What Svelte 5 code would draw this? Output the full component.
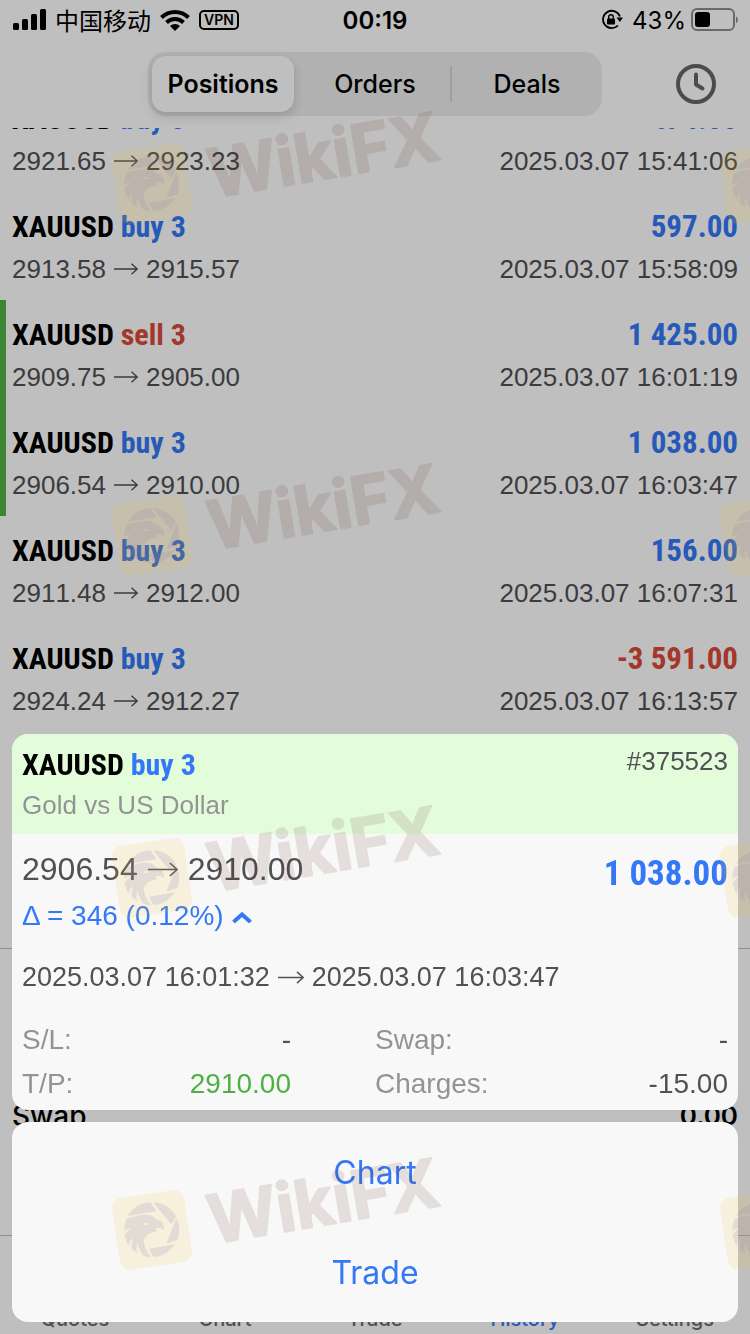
<!--
	Trading history screen: closed deals list with the detail sheet of one deal opened over it.
	The screen below is drawn in its normal colours and dimmed by the scrim.
-->
<script lang="ts">
	type Side = 'buy' | 'sell';

	interface Deal {
		side: Side;
		open: string;
		close: string;
		profit: string;
		time: string;
		takeProfit?: boolean;
	}

	const segments = ['Positions', 'Orders', 'Deals'];
	const tabs = ['Quotes', 'Chart', 'Trade', 'History', 'Settings'];

	const deals: Deal[] = [
		{ side: 'buy', open: '2921.65', close: '2923.23', profit: '474.00', time: '2025.03.07 15:41:06' },
		{ side: 'buy', open: '2913.58', close: '2915.57', profit: '597.00', time: '2025.03.07 15:58:09' },
		{ side: 'sell', open: '2909.75', close: '2905.00', profit: '1 425.00', time: '2025.03.07 16:01:19', takeProfit: true },
		{ side: 'buy', open: '2906.54', close: '2910.00', profit: '1 038.00', time: '2025.03.07 16:03:47', takeProfit: true },
		{ side: 'buy', open: '2911.48', close: '2912.00', profit: '156.00', time: '2025.03.07 16:07:31' },
		{ side: 'buy', open: '2924.24', close: '2912.27', profit: '-3 591.00', time: '2025.03.07 16:13:57' }
	];

	const stats = [
		{ label: 'S/L:', value: '-' },
		{ label: 'Swap:', value: '-' },
		{ label: 'T/P:', value: '2910.00', hit: true },
		{ label: 'Charges:', value: '-15.00' }
	];

	const stampRows = [184, 536, 878, 1230];
	const stampColumns = [152, 760];

	let activeSegment = $state('Positions');
	let activeTab = $state('History');
	let expanded = $state(true);
</script>

{#snippet arrow(size: number)}
	<svg class="arrow" width={size} height={size / 2} viewBox="0 0 24 12" role="img" aria-label="to">
		<path d="M0 6H23M17.500 .8L23.200 6L17.500 11.200" fill="none" stroke="currentColor" stroke-width="1.300" />
	</svg>
{/snippet}

<div class="screen">
	<div class="status">
		<div class="status-left">
			<svg width="34" height="22" viewBox="0 0 34 22" aria-hidden="true">
				<rect x="1" y="14" width="6" height="7" rx="1.500" />
				<rect x="10" y="10" width="6" height="11" rx="1.500" />
				<rect x="19" y="5" width="6" height="16" rx="1.500" />
				<rect x="28" y="0" width="6" height="21" rx="1.500" />
			</svg>
			<span class="carrier">中国移动</span>
			<svg width="30" height="22" viewBox="0 0 30 22" aria-hidden="true">
				<path d="M1.500 8.500C9 1 21 1 28.500 8.500" fill="none" stroke="#000" stroke-width="4" />
				<path d="M6.500 13.500C11.500 8.700 18.500 8.700 23.500 13.500" fill="none" stroke="#000" stroke-width="4" />
				<path d="M10 17C13 14.300 17 14.300 20 17L15 22Z" />
			</svg>
			<span class="vpn">VPN</span>
		</div>
		<span class="time">00:19</span>
		<div class="status-right">
			<svg width="22" height="22" viewBox="0 0 22 22" aria-hidden="true">
				<path d="M18.900 7.500A8.700 8.700 0 1 0 17 16.500" fill="none" stroke="#000" stroke-width="1.800" />
				<path d="M15.500 8.500H22L18.900 13Z" />
				<rect x="6" y="9.500" width="8" height="6" rx="1" />
				<path d="M7.700 10V8A2.300 2.300 0 0 1 12.300 8V10" fill="none" stroke="#000" stroke-width="1.400" />
			</svg>
			<span class="battery">
				43%
				<svg width="48" height="24" viewBox="0 0 48 24" aria-hidden="true">
					<rect x="2" y="1" width="42" height="21" rx="5" fill="none" stroke="#8c8c8c" stroke-width="2" />
					<rect x="5" y="4" width="15" height="15" rx="3" />
					<path d="M46 8.500C48.500 9.500 48.500 14 46 15Z" fill="#8c8c8c" />
				</svg>
			</span>
		</div>
	</div>

	<header class="toolbar">
		<div class="segments" role="tablist" aria-label="History type">
			{#each segments as name}
				<button
					type="button"
					role="tab"
					class="segment"
					class:active={activeSegment === name}
					aria-selected={activeSegment === name}
					onclick={() => (activeSegment = name)}
				>
					{name}
				</button>
			{/each}
		</div>
		<button type="button" class="period" aria-label="Period">
			<svg width="40" height="40" viewBox="0 0 40 40" aria-hidden="true">
				<circle cx="20" cy="20" r="18" fill="none" stroke="#666" stroke-width="4" />
				<path d="M20 10.500V20.500L26.500 24.500" fill="none" stroke="#666" stroke-width="4" stroke-linecap="round" stroke-linejoin="round" />
			</svg>
		</button>
	</header>

	<main class="history">
		<ul class="deals">
			{#each deals as deal}
				<li class="deal" class:take-profit={deal.takeProfit}>
					<div class="line title">
						<span>XAUUSD <span class={deal.side}>{deal.side} 3</span></span>
						<span class="amount" class:loss={deal.profit.startsWith('-')}>{deal.profit}</span>
					</div>
					<div class="line details">
						<span class="range">{deal.open}{@render arrow(24)}{deal.close}</span>
						<span>{deal.time}</span>
					</div>
				</li>
			{/each}
		</ul>
	</main>

	<section class="summary">
		<span>Swap</span>
		<strong>0.00</strong>
	</section>

	<nav class="tabbar">
		{#each tabs as tab}
			<a href={`#${tab.toLowerCase()}`} class:current={activeTab === tab} onclick={() => (activeTab = tab)}>{tab}</a>
		{/each}
	</nav>
</div>

<div class="scrim">
	<article class="card">
		<div class="card-head">
			<div>
				<h2 class="title">XAUUSD <span class="buy">buy 3</span></h2>
				<p>Gold vs US Dollar</p>
			</div>
			<span class="ticket">#375523</span>
		</div>
		<div class="card-body">
			<div class="line prices">
				<span class="range">2906.54{@render arrow(30)}2910.00</span>
				<span class="amount">1 038.00</span>
			</div>
			<button type="button" class="delta" aria-expanded={expanded} onclick={() => (expanded = !expanded)}>
				Δ = 346 (0.12%)
				<svg class:folded={!expanded} width="20" height="14" viewBox="0 0 20 14" aria-hidden="true">
					<path d="M1.500 13L10 5.500L18.500 13" fill="none" stroke="currentColor" stroke-width="4" />
				</svg>
			</button>
			{#if expanded}
				<p class="range dates">2025.03.07 16:01:32{@render arrow(26)}2025.03.07 16:03:47</p>
				<dl class="stats">
					{#each stats as stat}
						<div class="stat">
							<dt>{stat.label}</dt>
							<dd class:hit={stat.hit}>{stat.value}</dd>
						</div>
					{/each}
				</dl>
			{/if}
		</div>
	</article>

	<div class="card actions">
		<button type="button">Chart</button>
		<button type="button">Trade</button>
	</div>
</div>

<svg class="stamps" aria-hidden="true">
	{#each stampRows as y}
		{#each stampColumns as x}
			<g transform={`translate(${x} ${y})`}>
				<!-- the emblem is drawn on a grid three times finer than the page -->
				<g transform="scale(.3333) translate(-457 -298)">
					<rect class="plate" x="348" y="189" width="218" height="218" rx="30" transform="rotate(-8.500 457 298)" />
					<g class="emblem">
						<path d="M385 256A82 82 0 0 1 452 215L470 241Z" />
						<path d="M460 215A82 82 0 0 1 529 257L515 281Z" />
						<path d="M530 262A82 82 0 0 1 533 329L501 338Z" />
						<path d="M447 354L525 341A82 82 0 0 1 462 379Z" />
						<path
							fill-rule="evenodd"
							d="M381 264C400 258 440 246 458 256Q466 266 478 268Q494 276 493 298Q484 291 470 291Q464 294 474 302Q440 305 433 328Q430 350 455 380Q440 380 430 374Q418 360 414 338Q408 350 413 367Q404 363 397 355Q393 342 400 322Q389 330 387 346Q377 330 375 312Q384 300 394 293Q382 293 374 300Q373 280 381 264ZM428 279Q438 286 450 280Q446 275 428 279Z"
						/>
					</g>
				</g>
				<text x="60" y="14" transform="rotate(-9.500 60 14)">WikiFX</text>
			</g>
		{/each}
	{/each}
</svg>

<style>
	:global(body) {
		margin: 0;
		background: #fff;
	}

	.screen,
	.scrim {
		font-family: 'Liberation Sans', Arial, sans-serif;
		font-size: 26px;
		color: #505055;
	}

	.screen {
		display: flex;
		flex-direction: column;
		height: 100vh;
		overflow: hidden;
		background: #fff;
	}

	button {
		padding: 0;
		border: 0;
		background: none;
		font: inherit;
		color: inherit;
		cursor: pointer;
	}

	.status {
		display: grid;
		grid-template-columns: 1fr auto 1fr;
		align-items: center;
		height: 40px;
		padding: 0 12px;
		font-family: Inter, sans-serif;
		font-size: 24px;
		color: #000;
	}

	.status-left,
	.status-right {
		display: flex;
		align-items: center;
		gap: 9px;
	}

	.status-right {
		justify-content: flex-end;
	}

	.carrier {
		font-family: 'Noto Sans CJK SC', sans-serif;
		line-height: 40px;
	}

	.time {
		font-weight: 600;
	}

	.vpn {
		padding: 0 3px;
		border: 2px solid #000;
		border-radius: 5px;
		font-size: 14px;
		font-weight: 600;
		line-height: 16px;
	}

	.battery {
		display: flex;
		align-items: center;
		gap: 4px;
	}

	.toolbar {
		display: grid;
		grid-template-columns: 1fr minmax(0, 454px) 1fr;
		align-items: center;
		flex: none;
		height: 64px;
		padding: 12px 0;
	}

	.segments {
		display: flex;
		gap: 10px;
		grid-column: 2;
		box-sizing: border-box;
		height: 64px;
		padding: 4px;
		border-radius: 18px;
		background: #ededee;
		font-family: Inter, sans-serif;
		font-size: 25px;
		color: #000;
	}

	.segment {
		flex: 1;
		position: relative;
		border-radius: 14px;
		font-weight: 500;
	}

	.segment.active {
		background: #fff;
		font-weight: 600;
		box-shadow: 0 4px 12px rgba(0, 0, 0, 0.16);
	}

	.segment:not(.active) + .segment:not(.active)::before {
		position: absolute;
		top: 10px;
		bottom: 10px;
		left: -6px;
		width: 2px;
		background: #d4d4d6;
		content: '';
	}

	.period {
		display: flex;
		justify-self: end;
		margin-right: 34px;
	}

	.history {
		flex: 1;
		min-height: 0;
		overflow: hidden;
		border-bottom: 1px solid #c0c0c0;
	}

	/* scrolled down, so that the first deal is partly under the toolbar */
	.deals {
		margin: -44px 0 0;
		padding: 0;
		list-style: none;
	}

	.deal {
		display: flex;
		flex-direction: column;
		gap: 6px;
		padding: 15px 12px;
	}

	.take-profit {
		border-left: 6px solid #53b246;
		padding-left: 6px;
	}

	.line {
		display: flex;
		align-items: center;
		justify-content: space-between;
	}

	.title,
	.amount {
		font-family: 'Roboto Condensed', 'Liberation Sans Narrow', 'Liberation Sans', sans-serif;
		font-weight: 700;
	}

	.title {
		margin: 0;
		font-size: 30px;
		line-height: 40px;
		color: #000;
	}

	.amount {
		font-size: 31px;
	}

	.buy,
	.amount {
		color: #3478f6;
	}

	.sell,
	.amount.loss {
		color: #d94a38;
	}

	.details {
		line-height: 32px;
		font-kerning: none;
	}

	.range {
		display: flex;
		align-items: center;
		gap: 8px;
		font-kerning: none;
	}

	.summary {
		display: flex;
		justify-content: space-between;
		box-sizing: border-box;
		flex: none;
		height: 286px;
		padding: 149px 12px 0;
		font-family: Inter, sans-serif;
		font-size: 28px;
		line-height: 36px;
		color: #000;
	}

	.summary span {
		font-weight: 500;
	}

	.summary strong {
		font-size: 26px;
		font-weight: 600;
	}

	.tabbar {
		display: grid;
		grid-template-columns: repeat(5, 1fr);
		align-items: end;
		box-sizing: border-box;
		flex: none;
		height: 99px;
		padding-bottom: 2px;
		border-top: 1px solid #c0c0c0;
		font-family: Inter, sans-serif;
		font-size: 20px;
		font-weight: 500;
		line-height: 26px;
		text-align: center;
	}

	.tabbar a {
		color: #6a6a6a;
		text-decoration: none;
	}

	.tabbar .current {
		color: #3478f6;
	}

	.scrim {
		position: fixed;
		inset: 0;
		display: flex;
		flex-direction: column;
		justify-content: flex-end;
		gap: 12px;
		padding: 12px;
		background: rgba(0, 0, 0, 0.25);
	}

	.card {
		overflow: hidden;
		border-radius: 16px;
		background: #f8f8f8;
	}

	.card-head {
		display: flex;
		justify-content: space-between;
		padding: 11px 10px 13px;
		background: #e3fddb;
		line-height: 32px;
	}

	.card-head p {
		margin: 4px 0 0;
		color: #939396;
	}

	.card-body {
		padding: 15px 10px 4px;
	}

	.prices {
		align-items: flex-start;
		font-size: 32px;
		line-height: 40px;
	}

	.prices .range {
		gap: 10px;
	}

	.prices .amount {
		font-size: 35px;
		line-height: 50px;
	}

	.delta {
		display: flex;
		align-items: center;
		gap: 8px;
		font-size: 28px;
		line-height: 34px;
		color: #3478f6;
	}

	.folded {
		transform: rotate(180deg);
	}

	.dates {
		margin: 26px 0 23px;
		font-size: 27px;
		line-height: 36px;
	}

	.stats {
		display: grid;
		grid-template-columns: 1fr 1fr;
		margin: 0;
		font-size: 28px;
		line-height: 44px;
	}

	.stat {
		display: flex;
		justify-content: space-between;
	}

	.stat:nth-child(odd) {
		padding-right: 84px;
	}

	.stat dt {
		color: #939396;
	}

	.stat dd {
		margin: 0;
	}

	.stat .hit {
		color: #4db043;
	}

	.actions {
		display: flex;
		flex-direction: column;
		font-family: Inter, sans-serif;
		font-size: 32px;
		color: #3478f6;
	}

	.actions button {
		height: 100px;
	}

	.stamps {
		position: fixed;
		inset: 0;
		width: 100%;
		height: 100%;
		pointer-events: none;
	}

	.plate {
		fill: rgba(240, 190, 50, 0.14);
	}

	.emblem {
		fill: rgba(128, 118, 180, 0.17);
	}

	.stamps text {
		font-family: Inter, sans-serif;
		font-size: 67px;
		font-weight: 700;
		fill: #5c2819;
		stroke: #5c2819;
		stroke-width: 2px;
		stroke-linejoin: round;
		opacity: 0.12;
	}
</style>
